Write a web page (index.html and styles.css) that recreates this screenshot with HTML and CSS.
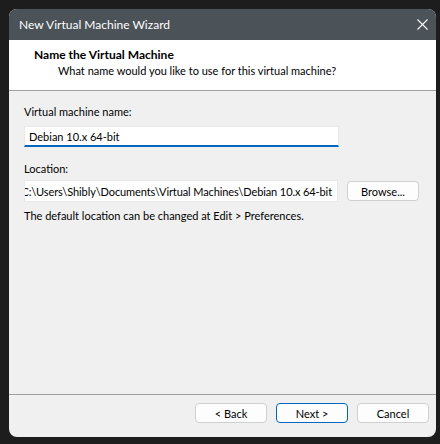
FILE: index.html
```html
<!DOCTYPE html>
<html>
<head>
<meta charset="utf-8">
<link rel="stylesheet" href="styles.css">
</head>
<body>
<div class="window">
  <div class="titlebar">
    <span class="title">New Virtual Machine Wizard</span>
    <svg class="close" width="11" height="11" viewBox="0 0 11 11"><path d="M0.5 0.5 L10.5 10.5 M10.5 0.5 L0.5 10.5" stroke="#ffffff" stroke-width="1.1" fill="none"/></svg>
  </div>
  <div class="header">
    <div class="h-title">Name the Virtual Machine</div>
    <div class="h-sub">What name would you like to use for this virtual machine?</div>
  </div>
  <div class="content">
    <div class="label first">Virtual machine name:</div>
    <div class="input name"><span>Debian 10.x 64-bit</span></div>
    <div class="label loc">Location:</div>
    <div class="row">
      <div class="input path"><span>C:\Users\Shibly\Documents\Virtual Machines\Debian 10.x 64-bit</span></div>
      <div class="btn browse">Browse...</div>
    </div>
    <div class="hint">The default location can be changed at Edit &gt; Preferences.</div>
  </div>
  <div class="footer">
    <div class="btn">&lt; Back</div>
    <div class="btn primary">Next &gt;</div>
    <div class="btn">Cancel</div>
  </div>
</div>
</body>
</html>
```
FILE: styles.css
```css
html, body {
  margin: 0;
  padding: 0;
  background: #1d1d1d;
  width: 440px;
  height: 444px;
  overflow: hidden;
}
body {
  padding: 9px 0 0 9px;
  box-sizing: border-box;
  font-family: "Lato", "Noto Sans", sans-serif;
  font-size: 11px;
  color: #000;
}
.window {
  width: 427px;
  height: 428px;
  border-radius: 8px;
  overflow: hidden;
  background: #f0f0f0;
  display: flex;
  flex-direction: column;
}
.titlebar {
  height: 31px;
  background: #4b5258;
  display: flex;
  align-items: center;
  padding: 0 10px 0 10px;
  color: #fff;
  font-size: 12px;
  flex-shrink: 0;
}
.title { flex: 1; }
.close { margin-right: -2px; }
.header {
  background: #fff;
  border-bottom: 1px solid #a0a0a0;
  padding: 7px 0 0 25px;
  box-sizing: border-box;
  height: 51px;
  flex-shrink: 0;
}
.h-title { font-weight: bold; font-size: 12px; line-height: 16px; }
.h-sub { line-height: 16px; padding-left: 24px; }
.content {
  flex: 1;
  padding: 0 15px;
  display: flex;
  flex-direction: column;
}
.label { line-height: 16px; }
.label.first { margin-top: 13px; }
.label.loc { margin-top: 14px; }
.input {
  background: #fff;
  height: 21px;
  box-sizing: border-box;
  display: flex;
  align-items: center;
  overflow: hidden;
  white-space: nowrap;
  border: 1px solid #e8e8e8;
}
.input.name {
  width: 315px;
  margin-top: 6px;
  padding-left: 4px;
  border-bottom: 2px solid #0067c0;
}
.row {
  display: flex;
  align-items: center;
  margin-top: 3px;
  gap: 9px;
}
.input.path {
  width: 314px;
  height: 22px;
  justify-content: flex-end;
  padding-right: 5px;
}
.input.path span { flex-shrink: 0; letter-spacing: -0.1px; }
.btn {
  width: 72px;
  height: 20px;
  box-sizing: border-box;
  background: #fdfdfd;
  border: 1px solid #d0d0d0;
  border-radius: 4px;
  display: flex;
  align-items: center;
  justify-content: center;
}
.hint { margin-top: 6px; line-height: 16px; }
.footer {
  height: 34px;
  border-top: 1px solid #a0a0a0;
  display: flex;
  align-items: flex-start;
  justify-content: flex-end;
  padding: 8px 7px 0 0;
  gap: 9px;
  flex-shrink: 0;
}
.btn.primary { border-color: #0067c0; }
```
